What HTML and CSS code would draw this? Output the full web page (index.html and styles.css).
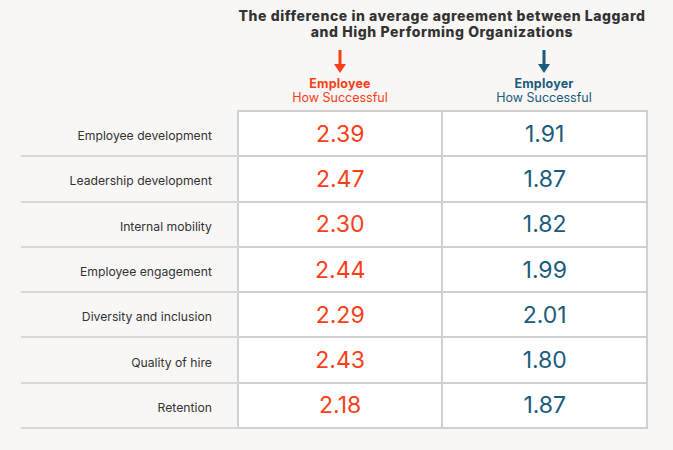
FILE: index.html
```html
<!DOCTYPE html>
<html>
<head>
<meta charset="utf-8">
<link rel="stylesheet" href="styles.css">
</head>
<body>
<div class="page">
  <div class="head">
    <div class="spacer"></div>
    <div class="title">The difference in average agreement between Laggard<br>and High Performing Organizations</div>
  </div>
  <div class="head cols">
    <div class="spacer"></div>
    <div class="colhead red">
      <svg class="arrow" width="12" height="23" viewBox="0 0 12 23"><path d="M4.5 0h3v14h4.5L6 23 0 14h4.5z" fill="currentColor"/></svg>
      <div class="strong">Employee</div>
      <div>How Successful</div>
    </div>
    <div class="colhead blue">
      <svg class="arrow" width="12" height="23" viewBox="0 0 12 23"><path d="M4.5 0h3v14h4.5L6 23 0 14h4.5z" fill="currentColor"/></svg>
      <div class="strong">Employer</div>
      <div>How Successful</div>
    </div>
  </div>
  <table class="grid">
    <tr><td class="label">Employee development</td><td class="val red">2.39</td><td class="val blue">1.91</td></tr>
    <tr><td class="label">Leadership development</td><td class="val red">2.47</td><td class="val blue">1.87</td></tr>
    <tr><td class="label">Internal mobility</td><td class="val red">2.30</td><td class="val blue">1.82</td></tr>
    <tr><td class="label">Employee engagement</td><td class="val red">2.44</td><td class="val blue">1.99</td></tr>
    <tr><td class="label">Diversity and inclusion</td><td class="val red">2.29</td><td class="val blue">2.01</td></tr>
    <tr><td class="label">Quality of hire</td><td class="val red">2.43</td><td class="val blue">1.80</td></tr>
    <tr><td class="label">Retention</td><td class="val red">2.18</td><td class="val blue">1.87</td></tr>
  </table>
</div>
</body>
</html>
```
FILE: styles.css
```css
html, body {
  margin: 0;
  padding: 0;
  background: #f8f7f5;
}
body {
  width: 673px;
  height: 450px;
  overflow: hidden;
  font-family: Inter, "Liberation Sans", sans-serif;
  color: #333;
}
.page {
  padding-left: 21px;
}
.head {
  display: grid;
  grid-template-columns: 217px 408px;
}
.head.cols {
  grid-template-columns: 217px 204px 204px;
  margin-top: 11px;
}
.title {
  padding-top: 8px;
  font-size: 14px;
  line-height: 15.5px;
  font-weight: 800;
  text-align: center;
  color: #333;
  letter-spacing: 0.57px;
}
.colhead {
  display: flex;
  flex-direction: column;
  align-items: center;
  font-size: 12.5px;
  line-height: 14px;
}
.arrow {
  display: block;
  margin-bottom: 4px;
}
.strong {
  font-weight: 700;
  letter-spacing: 0.2px;
}
.red { color: #fa3e17; }
.blue { color: #1b5b7c; }
.grid {
  margin-top: 5px;
  border-collapse: collapse;
  width: 627px;
}
.grid tr {
  height: 45.3px;
}
.label {
  width: 192px;
  padding: 4px 25px 0 0;
  text-align: right;
  font-size: 12.2px;
  color: #333;
  border-bottom: 2px solid #d8d8d8;
}
.val {
  width: 204px;
  padding: 0;
  background: #fff;
  border: 2px solid #d0d0d0;
  text-align: center;
  font-size: 23px;
}
```
